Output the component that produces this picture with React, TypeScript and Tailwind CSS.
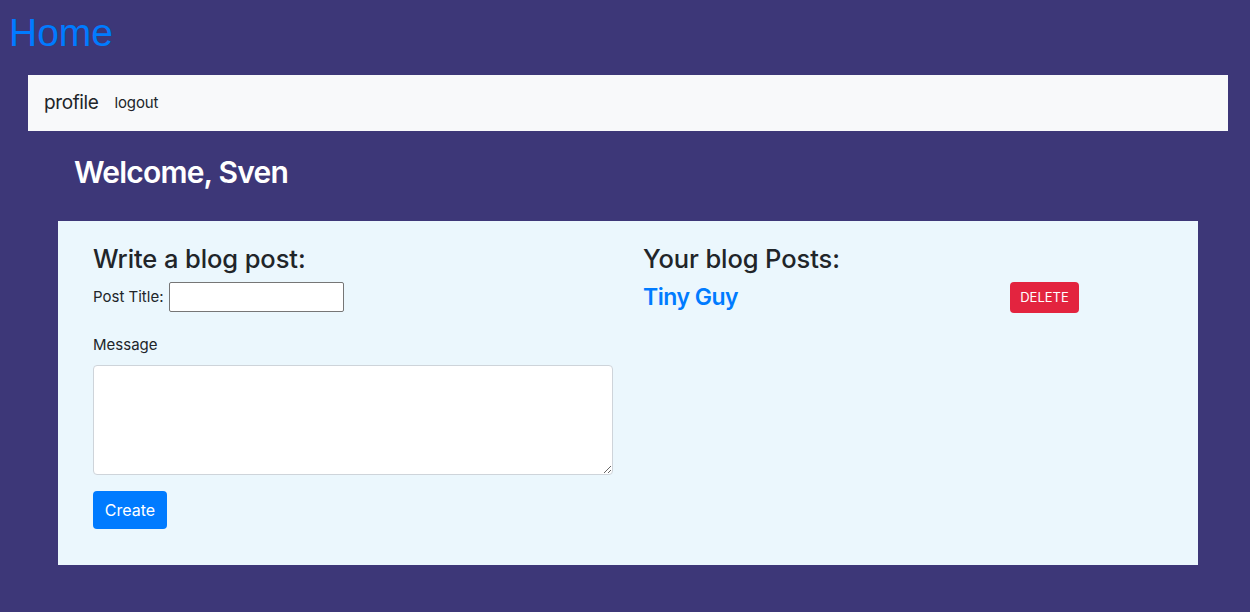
import { useState } from 'react';

function App() {
    const [title, setTitle] = useState('');
    const [message, setMessage] = useState('');
    const posts = [{ id: 1, title: 'Tiny Guy' }];

    return (
        <div className="min-h-screen bg-[#3d3778] pb-12 font-['Inter','Noto_Sans',sans-serif]">
            <h1 className="px-[9px] pt-[9px] font-['Liberation_Sans',Arial,sans-serif] text-[39px] leading-[48px] text-[#007bff]">
                Home
            </h1>

            <nav className="ml-[28px] mr-[22px] mt-[18px] flex h-[56px] items-center gap-4 bg-[#f8f9fa] px-4">
                <a className="text-[19px] tracking-[-0.4px] text-[#212529]">profile</a>
                <a className="text-[15px] tracking-[-0.1px] text-[#212529]">logout</a>
            </nav>

            <h2 className="ml-[74px] mt-[22px] text-[30px] font-semibold leading-[38px] tracking-[-0.8px] text-white">
                Welcome, Sven
            </h2>

            <div className="mx-[58px] mt-[30px] grid w-[1140px] grid-cols-2 gap-[30px] bg-[#ebf7fd] px-[35px] pb-[36px] pt-[22px]">
                <div className="text-[#212529]">
                    <h4 className="text-[25.5px] font-medium leading-[31px] tracking-[-0.1px]">Write a blog post:</h4>
                    <div className="mt-[8px] flex items-center text-[15px]">
                        <label htmlFor="title">Post Title:</label>
                        <input
                            id="title"
                            value={title}
                            onChange={(e) => setTitle(e.target.value)}
                            className="ml-[6px] h-[30px] w-[175px] rounded-[2px] border border-[#767676] bg-white px-1"
                        />
                    </div>
                    <label htmlFor="message" className="mt-[22px] block text-[15px] leading-[22px]">Message</label>
                    <textarea
                        id="message"
                        value={message}
                        onChange={(e) => setMessage(e.target.value)}
                        className="mt-[9px] block h-[110px] w-full rounded-[4px] border border-[#ced4da] bg-white px-3 py-2"
                    />
                    <button className="mt-[16px] h-[38px] w-[74px] rounded-[4px] bg-[#007bff] text-[16px] text-white">
                        Create
                    </button>
                </div>

                <div className="text-[#212529]">
                    <h4 className="text-[25.5px] font-medium leading-[31px] tracking-[-0.1px]">Your blog Posts:</h4>
                    {posts.map((post) => (
                        <div key={post.id} className="mt-[8px] flex items-center">
                            <a className="w-[367px] text-[23px] font-semibold leading-[31px] tracking-[-0.5px] text-[#007bff]">
                                {post.title}
                            </a>
                            <button className="h-[31px] w-[69px] rounded-[4px] bg-[#e3243f] text-[13px] uppercase text-white">
                                Delete
                            </button>
                        </div>
                    ))}
                </div>
            </div>
        </div>
    );
}

export default App;
